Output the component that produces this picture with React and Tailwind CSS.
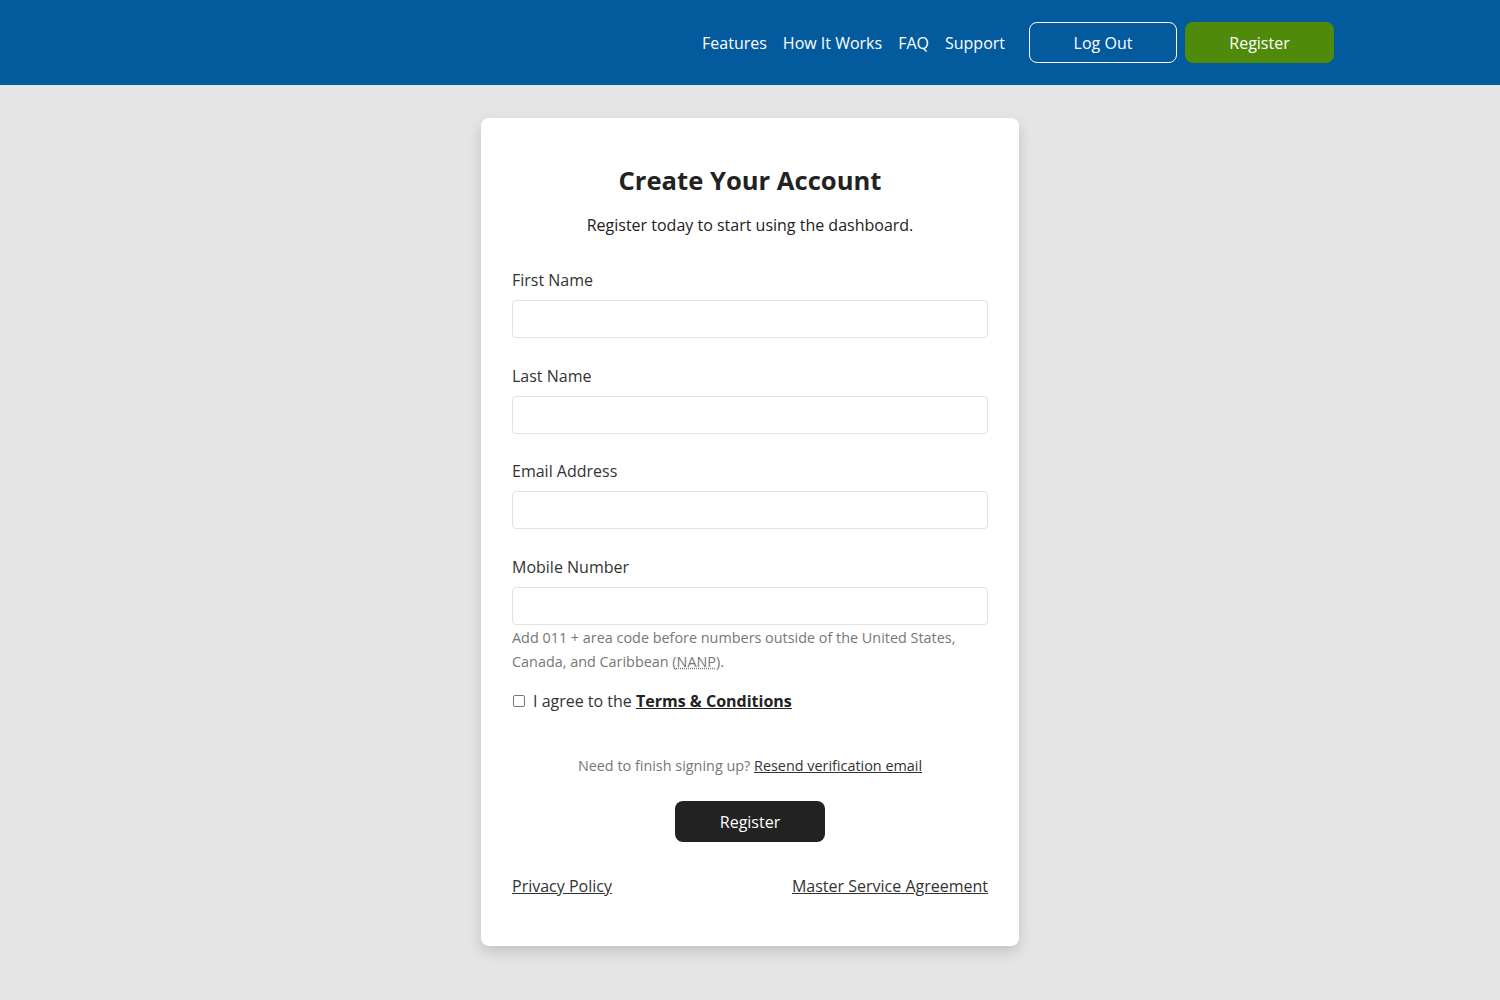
import React from "react";

function Field({ label, children }) {
  return (
    <div className="flex flex-col">
      <label className="text-[16px] leading-6 text-[#333] mb-2">{label}</label>
      <input
        type="text"
        className="h-[38px] w-full rounded border border-[#e2e2e2] bg-white px-3 outline-none"
      />
      {children}
    </div>
  );
}

export default function App() {
  return (
    <div
      className="min-h-screen bg-[#e5e5e5]"
      style={{ fontFamily: '"Open Sans", "Noto Sans", sans-serif' }}
    >
      <header className="h-[85px] bg-[#035a9d]">
        <div className="flex h-full items-center justify-end pr-[166px]">
          <nav className="flex items-center gap-4 text-[16px] text-white mr-6">
            <a href="#">Features</a>
            <a href="#">How It Works</a>
            <a href="#">FAQ</a>
            <a href="#">Support</a>
          </nav>
          <button className="h-[41px] w-[148px] rounded-lg border border-white text-[16px] text-white">
            Log Out
          </button>
          <button className="ml-2 h-[41px] w-[149px] rounded-lg bg-[#4f8a0b] text-[16px] text-white">
            Register
          </button>
        </div>
      </header>

      <main className="flex justify-center pt-[33px] pb-12">
        <div className="w-[538px] rounded-lg bg-white px-[31px] pt-[45px] pb-[48px] shadow-[0_6px_14px_rgba(0,0,0,0.15)]">
          <h1 className="text-center text-[25.6px] font-bold leading-9 text-[#222]">
            Create Your Account
          </h1>
          <p className="mt-[14px] text-center text-[16px] leading-6 text-[#222]">
            Register today to start using the dashboard.
          </p>

          <div className="mt-[31px] flex flex-col gap-[25.7px]">
            <Field label="First Name" />
            <Field label="Last Name" />
            <Field label="Email Address" />
            <Field label="Mobile Number">
              <p className="mt-px text-[14.4px] leading-6 text-[#777]">
                Add 011 + area code before numbers outside of the United States,
                Canada, and Caribbean (<abbr className="underline decoration-dotted" title="North American Numbering Plan">NANP</abbr>).
              </p>
            </Field>
          </div>

          <label className="mt-[15px] flex items-center text-[16px] leading-6 text-[#333]">
            <span className="mr-2 ml-px inline-block h-3 w-3 rounded-[2px] border border-[#777] bg-white" />
            <span>
              I agree to the{" "}
              <a href="#" className="font-bold underline text-[#222]">
                Terms &amp; Conditions
              </a>
            </span>
          </label>

          <p className="mt-[41px] text-center text-[14.4px] leading-6 text-[#777]">
            Need to finish signing up?{" "}
            <a href="#" className="text-[#333] underline">
              Resend verification email
            </a>
          </p>

          <div className="mt-[23px] flex justify-center">
            <button className="h-[41px] w-[150px] rounded-lg bg-[#222] text-[16px] text-white">
              Register
            </button>
          </div>

          <div className="mt-8 flex justify-between text-[16px] leading-6 text-[#333]">
            <a href="#" className="underline">
              Privacy Policy
            </a>
            <a href="#" className="underline">
              Master Service Agreement
            </a>
          </div>
        </div>
      </main>
    </div>
  );
}
